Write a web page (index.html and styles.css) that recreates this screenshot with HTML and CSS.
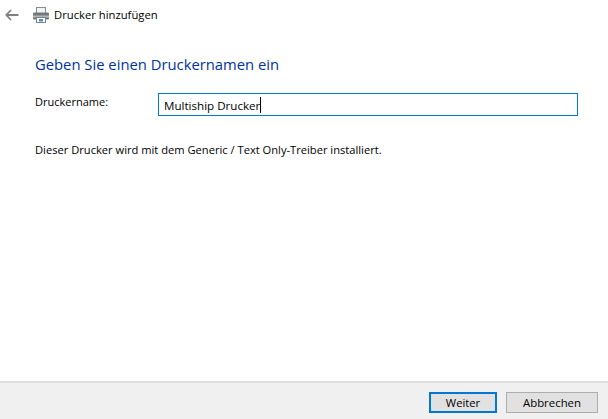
FILE: index.html
```html
<!DOCTYPE html>
<html lang="de">
<head>
<meta charset="utf-8">
<title>Drucker hinzufügen</title>
<link rel="stylesheet" href="styles.css">
</head>
<body>
<div class="window">
  <header class="titlebar">
    <svg class="back" width="14" height="12" viewBox="0 0 14 12"><path d="M6 1 1.3 6 6 11M1.5 6H13.5" fill="none" stroke="#808080" stroke-width="1.8"/></svg>
    <svg class="printer" width="18" height="18" viewBox="0 0 18 18">
      <rect x="4.5" y="1.5" width="9" height="6" fill="#f2f2f2" stroke="#8c8c8c"/>
      <rect x="1" y="6.5" width="16" height="7" rx="1" fill="#74787c"/>
      <rect x="1" y="9.5" width="16" height="2" fill="#b4b8bc"/>
      <rect x="4.5" y="11.5" width="9" height="5" fill="#fff" stroke="#808080"/>
      <rect x="7" y="13" width="4" height="2.5" fill="#3f93d8"/>
    </svg>
    <span class="title">Drucker hinzufügen</span>
  </header>
  <main class="content">
    <h1 class="heading">Geben Sie einen Druckernamen ein</h1>
    <div class="field">
      <label class="label">Druckername:</label>
      <div class="input"><span>Multiship Drucker</span><i class="caret"></i></div>
    </div>
    <p class="note">Dieser Drucker wird mit dem Generic / Text Only-Treiber installiert.</p>
  </main>
  <footer class="footer">
    <button class="btn btn-primary">Weiter</button>
    <button class="btn btn-cancel">Abbrechen</button>
  </footer>
</div>
</body>
</html>
```
FILE: styles.css
```css
* { box-sizing: border-box; }
html, body { margin: 0; height: 100%; }
body { background: #fff; font-family: "Open Sans", "Noto Sans", "Liberation Sans", sans-serif; font-size: 11.2px; color: #000; }
.window { width: 608px; height: 419px; display: flex; flex-direction: column; overflow: hidden; }
.titlebar { height: 30px; display: flex; align-items: center; padding-left: 5px; }
.back { flex: none; }
.printer { flex: none; margin-left: 13px; }
.title { margin-left: 4px; font-size: 11.25px; line-height: 30px; }
.content { flex: 1; padding: 23px 30px 0 35px; }
.heading { margin: 0; font-size: 14.8px; font-weight: 400; color: #003399; line-height: 22px; }
.field { display: flex; margin-top: 18px; height: 23px; }
.label { width: 123px; font-size: 11px; line-height: 18px; }
.input { width: 420px; height: 23px; border: 1px solid #0078d7; display: flex; align-items: center; padding: 1px 0 0 5px; font-size: 11.6px; }
.caret { width: 1px; height: 16px; background: #000; }
.note { margin: 25px 0 0; font-size: 11.15px; line-height: 18px; }
.footer { height: 38px; background: #f0f0f0; border-top: 2px solid #dfdfdf; display: flex; justify-content: flex-end; align-items: flex-start; gap: 9px; padding: 9px 10px 0 0; }
.btn { height: 21px; padding: 0; font: inherit; line-height: 16px; color: #000; background: #e1e1e1; }
.btn-primary { width: 68px; border: 2px solid #0078d7; font-size: 11.2px; }
.btn-cancel { width: 92px; border: 1px solid #adadad; font-size: 11.4px; }
```
